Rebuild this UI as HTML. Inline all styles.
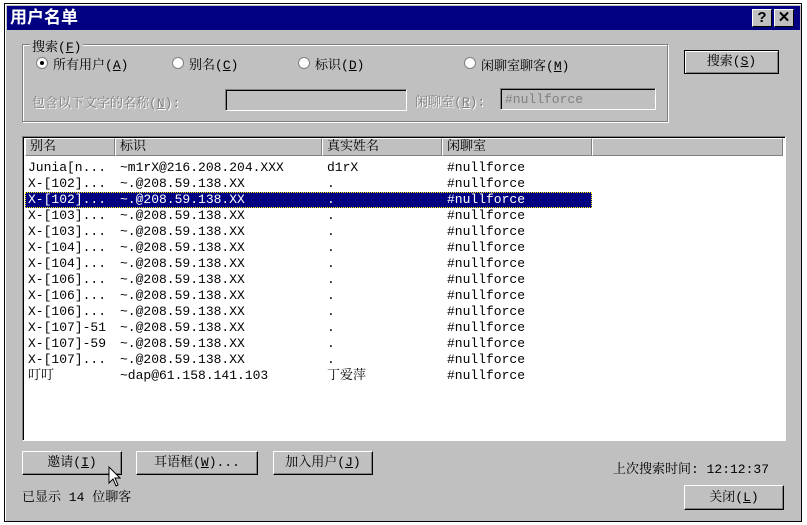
<!DOCTYPE html>
<html><head><meta charset="utf-8"><style>
*{box-sizing:border-box;margin:0;padding:0}
body{width:807px;height:525px;background:#fff;position:relative;overflow:hidden;font-family:"Liberation Mono","Noto Serif CJK SC","Noto Sans CJK SC",monospace;font-size:13px;color:#000}
.a{position:absolute;white-space:nowrap}
.win{left:4px;top:3px;width:798px;height:519px;background:#c0c0c0;border:1px solid #000;box-shadow:inset 1px 1px #fff}
.title{left:7px;top:6px;width:793px;height:24px;background:#000080;color:#fff;font-size:17px;font-weight:bold;line-height:24px;padding-left:3px;font-family:"Liberation Sans","Noto Sans CJK SC",sans-serif}
.tb{top:9px;width:20px;height:18px;background:#c0c0c0;border:1px solid;border-color:#fff #000 #000 #fff;color:#000;font-weight:bold;font-size:15px;text-align:center;line-height:16px;font-family:"Liberation Sans",sans-serif}
.btn{background:#c0c0c0;border:1px solid;border-color:#fff #000 #000 #fff;box-shadow:inset -1px -1px #808080;text-align:center}
.grp{left:22px;top:44px;width:646px;height:78px;border:1px solid #808080;box-shadow:1px 1px #fff,inset 1px 1px #fff}
.sunk{border:1px solid;border-color:#808080 #fff #fff #808080;box-shadow:inset 1px 1px #000}
.rad{width:12px;height:12px;border-radius:50%;background:#fff;border:1px solid #808080}
.gray{color:#808080;text-shadow:1px 1px #fff}
.hd{top:138px;height:18px;background:#c0c0c0;border:1px solid;border-color:#fff #808080 #808080 #fff;padding-left:4px;line-height:16px}
.row{left:25px;width:567px;height:16px;line-height:16px;white-space:pre}
.row span{position:absolute;top:0}
</style></head><body>
<div class="a win"></div>
<div class="a title">用户名单</div>
<div class="a tb" style="left:752px">?</div>
<div class="a tb" style="left:774px">✕</div>

<div class="a grp"></div>
<div class="a" style="left:30px;top:36px;background:#c0c0c0;padding:0 2px">搜索(<u>F</u>)</div>
<div class="a rad" style="left:36px;top:57px"><div style="width:4px;height:4px;background:#000;border-radius:50%;margin:3px"></div></div>
<div class="a" style="left:53px;top:54px">所有用户(<u>A</u>)</div>
<div class="a rad" style="left:172px;top:57px"></div>
<div class="a" style="left:189px;top:54px">别名(<u>C</u>)</div>
<div class="a rad" style="left:298px;top:57px"></div>
<div class="a" style="left:315px;top:54px">标识(<u>D</u>)</div>
<div class="a rad" style="left:464px;top:57px"></div>
<div class="a" style="left:481px;top:55px">闲聊室聊客(<u>M</u>)</div>
<div class="a gray" style="left:32px;top:92px">包含以下文字的名称(<u>N</u>):</div>
<div class="a sunk" style="left:225px;top:89px;width:182px;height:22px"></div>
<div class="a gray" style="left:415px;top:91px">闲聊室(<u>R</u>):</div>
<div class="a sunk" style="left:500px;top:88px;width:156px;height:22px;color:#808080;padding:3px 0 0 4px">#nullforce</div>
<div class="a btn" style="left:684px;top:50px;width:95px;height:24px;border:1px solid #000;box-shadow:inset 1px 1px #fff,inset -1px -1px #808080;line-height:21px">搜索(<u>S</u>)</div>

<div class="a sunk" style="left:22px;top:136px;width:764px;height:305px;background:#fff"></div>
<div class="a hd" style="left:25px;width:90px">别名</div>
<div class="a hd" style="left:115px;width:207px">标识</div>
<div class="a hd" style="left:322px;width:120px">真实姓名</div>
<div class="a hd" style="left:442px;width:150px">闲聊室</div>
<div class="a hd" style="left:592px;width:191px"></div>

<div class="a" style="left:0;top:1px">
<div class="a row" style="top:159px"><span style="left:3px">Junia[n...</span><span style="left:95px">~m1rX@216.208.204.XXX</span><span style="left:302px">d1rX</span><span style="left:422px">#nullforce</span></div>
<div class="a row" style="top:175px"><span style="left:3px">X-[102]...</span><span style="left:95px">~.@208.59.138.XX</span><span style="left:302px">.</span><span style="left:422px">#nullforce</span></div>
<div class="a row" style="top:191px;background:#000080;color:#fff;outline:1px dotted #ff0;outline-offset:-1px"><span style="left:3px">X-[102]...</span><span style="left:95px">~.@208.59.138.XX</span><span style="left:302px">.</span><span style="left:422px">#nullforce</span></div>
<div class="a row" style="top:207px"><span style="left:3px">X-[103]...</span><span style="left:95px">~.@208.59.138.XX</span><span style="left:302px">.</span><span style="left:422px">#nullforce</span></div>
<div class="a row" style="top:223px"><span style="left:3px">X-[103]...</span><span style="left:95px">~.@208.59.138.XX</span><span style="left:302px">.</span><span style="left:422px">#nullforce</span></div>
<div class="a row" style="top:239px"><span style="left:3px">X-[104]...</span><span style="left:95px">~.@208.59.138.XX</span><span style="left:302px">.</span><span style="left:422px">#nullforce</span></div>
<div class="a row" style="top:255px"><span style="left:3px">X-[104]...</span><span style="left:95px">~.@208.59.138.XX</span><span style="left:302px">.</span><span style="left:422px">#nullforce</span></div>
<div class="a row" style="top:271px"><span style="left:3px">X-[106]...</span><span style="left:95px">~.@208.59.138.XX</span><span style="left:302px">.</span><span style="left:422px">#nullforce</span></div>
<div class="a row" style="top:287px"><span style="left:3px">X-[106]...</span><span style="left:95px">~.@208.59.138.XX</span><span style="left:302px">.</span><span style="left:422px">#nullforce</span></div>
<div class="a row" style="top:303px"><span style="left:3px">X-[106]...</span><span style="left:95px">~.@208.59.138.XX</span><span style="left:302px">.</span><span style="left:422px">#nullforce</span></div>
<div class="a row" style="top:319px"><span style="left:3px">X-[107]-51</span><span style="left:95px">~.@208.59.138.XX</span><span style="left:302px">.</span><span style="left:422px">#nullforce</span></div>
<div class="a row" style="top:335px"><span style="left:3px">X-[107]-59</span><span style="left:95px">~.@208.59.138.XX</span><span style="left:302px">.</span><span style="left:422px">#nullforce</span></div>
<div class="a row" style="top:351px"><span style="left:3px">X-[107]...</span><span style="left:95px">~.@208.59.138.XX</span><span style="left:302px">.</span><span style="left:422px">#nullforce</span></div>
<div class="a row" style="top:367px"><span style="left:3px">叮叮</span><span style="left:95px">~dap@61.158.141.103</span><span style="left:302px">丁爱萍</span><span style="left:422px">#nullforce</span></div>
</div>

<div class="a btn" style="left:22px;top:451px;width:100px;height:24px;line-height:22px">邀请(<u>I</u>)</div>
<div class="a btn" style="left:136px;top:451px;width:122px;height:24px;line-height:22px">耳语框(<u>W</u>)...</div>
<div class="a btn" style="left:273px;top:451px;width:100px;height:24px;line-height:22px">加入用户(<u>J</u>)</div>
<svg class="a" style="left:108px;top:466px" width="14" height="22"><path d="M1 1V17L5 13L8 20L10 19L7 12H12Z" fill="#fff" stroke="#000"/></svg>
<div class="a" style="left:22px;top:486px">已显示 14 位聊客</div>
<div class="a" style="left:613px;top:458px">上次搜索时间: 12:12:37</div>
<div class="a btn" style="left:684px;top:485px;width:100px;height:25px;line-height:23px">关闭(<u>L</u>)</div>
</body></html>
